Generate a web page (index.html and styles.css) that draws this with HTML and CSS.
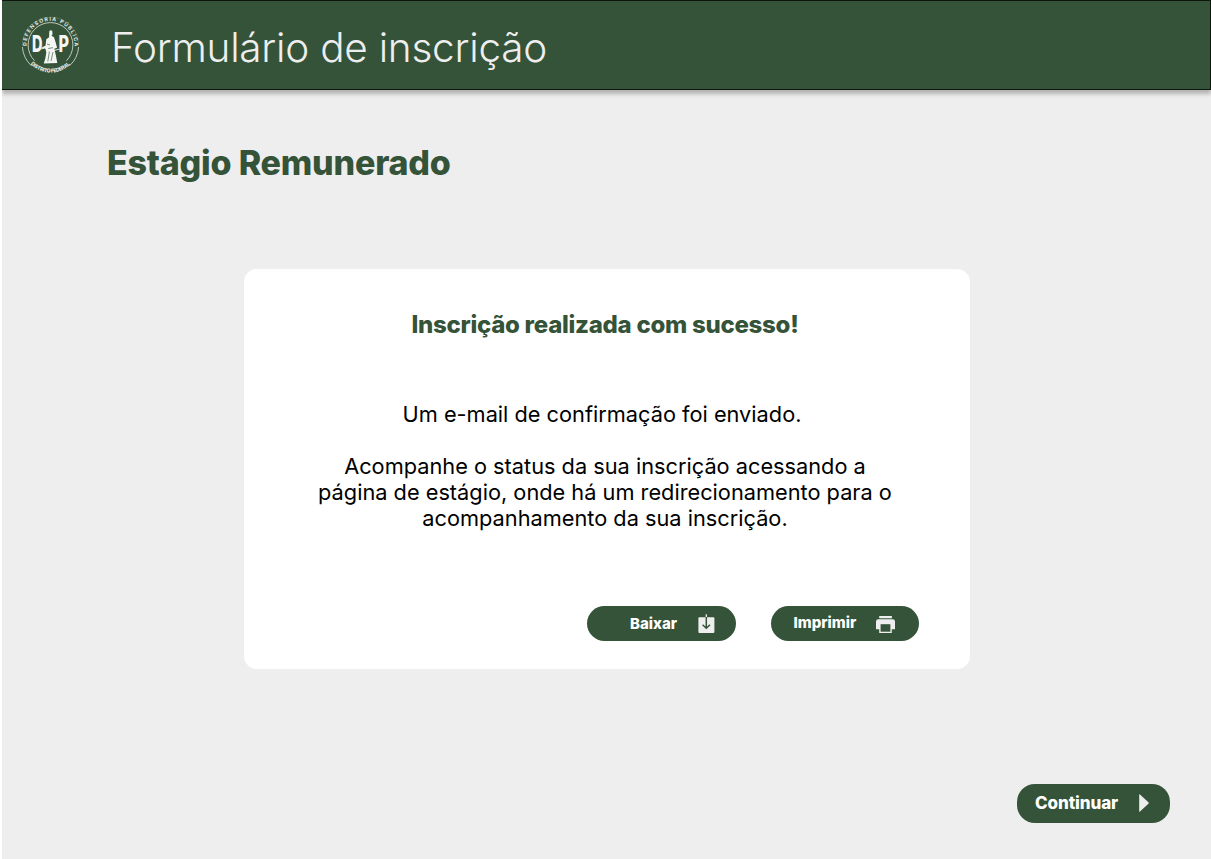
FILE: index.html
```html
<!DOCTYPE html>
<html lang="pt-BR">
<head>
<meta charset="utf-8">
<title>Formulário de inscrição</title>
<link rel="stylesheet" href="styles.css">
</head>
<body>
<div class="page">
  <header class="header">
    <svg class="logo" viewBox="0 0 60 60" width="60" height="60">
      <defs>
        <path id="arc-top" d="M6.3 36A24 24 0 1 1 52.7 36"/>
        <path id="arc-bottom" d="M7.1 46A27.5 27.5 0 0 0 51.9 46"/>
      </defs>
      <circle class="ring" cx="29.5" cy="30" r="22.4"/>
      <path class="ring" d="M10.5 50.8A28.2 28.2 0 0 1 1.4 32M57.6 32A28.2 28.2 0 0 1 48.5 50.8"/>
      <path class="ring ring-faint" d="M1.4 28A28.2 28.2 0 0 1 57.6 28"/>
      <path class="ring-gap" d="M13.5 45.7A22.4 22.4 0 0 0 45.5 45.7"/>
      <text class="logo-ring-text"><textPath href="#arc-top" startOffset="5" textLength="78">DEFENSORIA PÚBLICA</textPath></text>
      <text class="logo-ring-text logo-ring-text-bold"><textPath href="#arc-bottom" startOffset="4" textLength="44">DISTRITO FEDERAL</textPath></text>
      <text class="logo-letter" x="11" y="36.8" textLength="10.5" lengthAdjust="spacingAndGlyphs">D</text>
      <text class="logo-letter" x="37.6" y="36.8" textLength="10.5" lengthAdjust="spacingAndGlyphs">P</text>
      <path class="figure" d="M28.3 16.2q1.5-2 3 0l.2 3-1 1.5 2.5 1.5 1.6 5 1.5 5.6-2.8 1 1.6 6.7 1.4 7.5-13.5.5 1.5-5 1-6-1-4.5-4.6-.3 4.8-2 .8-6.5 2.8-2z"/>
      <path class="fold" d="M27 33.5l5-.8M28.4 36.5l-1.6 10M32 37l-2 9M26 29l3 1"/>
      <path class="arm" d="M19 34q5-1.8 9 .5t10-.3"/>
    </svg>
    <h1 class="header-title">Formulário de inscrição</h1>
  </header>
  <main class="main">
    <h2 class="section-title">Estágio Remunerado</h2>
    <section class="card">
      <h3 class="card-title">Inscrição realizada com sucesso!</h3>
      <p class="message message-lead">Um e-mail de confirmação foi enviado.</p>
      <p class="message">Acompanhe o status da sua inscrição acessando a<br>página de estágio, onde há um redirecionamento para o<br>acompanhamento da sua inscrição.</p>
      <div class="actions">
        <button class="button button-download">Baixar
          <svg class="icon" width="17" height="20" viewBox="0 0 17 20">
            <rect class="icon-fill" x=".4" y="3.2" width="16" height="15.8" rx="1"/>
            <path class="icon-light" d="M8.3.3v3"/>
            <path class="icon-dark" d="M8.3 3v11.3M4.6 10.8l3.7 3.5 3.7-3.5"/>
          </svg>
        </button>
        <button class="button button-print"><span class="print-label">Imprimir</span>
          <svg class="icon" width="19" height="17" viewBox="0 0 19 17">
            <path class="icon-fill" d="M3.2 0h12.7v2.2H3.2zM2.3 3.2h14.4Q19 3.2 19 5.5v7.7h-3.2V17H3.2v-3.8H0V5.5q0-2.3 2.3-2.3z"/>
            <path class="icon-hole" d="M4.6 8.2h9.8v7.5H4.6z"/>
          </svg>
        </button>
      </div>
    </section>
    <div class="footer">
      <button class="button button-continue">Continuar
        <svg class="icon" width="10" height="18" viewBox="0 0 10 18"><path class="icon-fill" d="M.2.7Q.2-.2 1 .5l8.4 7.8q.7.7 0 1.4L1 17.5q-.8.7-.8-.2z"/></svg>
      </button>
    </div>
  </main>
</div>
</body>
</html>
```
FILE: styles.css
```css
* { box-sizing: border-box; }
body { margin: 0; background: #fff; font-family: Inter, "Liberation Sans", sans-serif; }
h1, h2, h3, p { margin: 0; white-space: nowrap; }

.page { height: 859px; margin-left: 2px; background: #eee; overflow: hidden; }
.header {
  display: flex; align-items: center; height: 90px; padding-left: 19px;
  background: #355338; border: 1px solid #0c160d; border-left: 0;
  box-shadow: 0 4px 4px rgba(0, 0, 0, .25);
}
.logo { flex: none; display: block; }
.header-title { margin: 4px 0 0 30px; font-size: 40.5px; line-height: 49px; font-weight: 290; letter-spacing: -.25px; color: #eee; }

.ring { fill: none; stroke: #dfe5df; stroke-width: .8; }
.ring-faint { stroke: #6c836e; stroke-width: .6; }
.ring-gap { fill: none; stroke: #355338; stroke-width: 2; }
.logo-ring-text { font: 700 5.2px Inter, sans-serif; fill: #e6ebe6; }
.logo-ring-text-bold { font-weight: 800; }
.logo-letter { font: 800 23px Inter, sans-serif; fill: #f4f6f4; }
.figure { fill: #f4f6f4; }
.fold { fill: none; stroke: #6c836e; stroke-width: .9; }
.arm { fill: none; stroke: #f4f6f4; stroke-width: .9; }

.main { display: flex; flex-direction: column; height: 769px; padding: 52px 41px 36px 105px; }
.section-title { font-size: 34px; line-height: 42px; font-weight: 800; letter-spacing: -.2px; color: #355338; }
.card {
  display: flex; flex-direction: column; width: 725.5px; height: 400px; margin: 85px 0 0 137px;
  padding: 41px 50.5px 28px 47px; border-radius: 13px; background: #fff; text-align: center;
}
.card-title { font-size: 24px; line-height: 30px; font-weight: 800; letter-spacing: -.27px; color: #355338; }
.message { font-size: 21.75px; line-height: 26px; color: #000; }
.message-lead { margin: 61px 6px 26px 0; }
.actions { display: flex; justify-content: flex-end; gap: 35px; margin-top: auto; }
.button {
  display: flex; align-items: center; justify-content: space-between; width: 148.5px; height: 35px;
  margin: 0; border: 0; border-radius: 18px; background: #355338; color: #fff;
  font: 800 15px/20px Inter, "Liberation Sans", sans-serif;
}
.button-download { padding: 0 21px 0 43px; }
.button-print { padding: 0 24px 0 23px; }
.print-label { margin-bottom: 1px; }
.print-label + .icon { margin-top: 1px; }
.footer { display: flex; justify-content: flex-end; margin-top: auto; }
.button-continue { width: 153px; height: 39.5px; padding: 0 21px 0 18px; font-size: 17px; letter-spacing: -.1px; }
.icon { flex: none; display: block; }
.icon-fill { fill: #eee; }
.icon-hole { fill: #355338; }
.icon-light { fill: none; stroke: #eee; stroke-width: 1.3; }
.icon-dark { fill: none; stroke: #355338; stroke-width: 1.5; }
```
